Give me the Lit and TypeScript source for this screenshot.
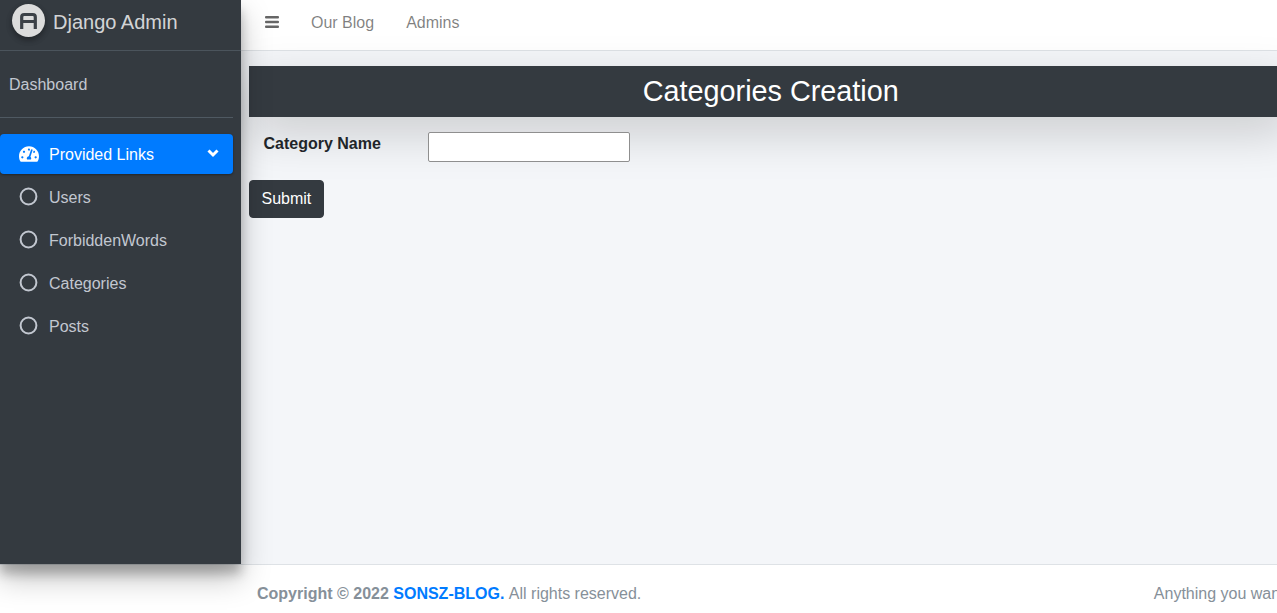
import { LitElement, html, css, svg } from "lit";
import { customElement } from "lit/decorators.js";

const gauge = svg`<path d="M288 32C128.94 32 0 160.94 0 320c0 52.8 14.25 102.26 39.06 144.8 5.61 9.62 16.3 15.2 27.44 15.2h443c11.14 0 21.83-5.58 27.44-15.2C561.75 422.26 576 372.8 576 320c0-159.06-128.94-288-288-288zm0 64c14.71 0 26.58 10.13 30.32 23.65-1.11 2.26-2.64 4.23-3.45 6.67l-9.22 27.67c-5.13 3.49-10.97 6.01-17.64 6.01-17.67 0-32-14.33-32-32S270.33 96 288 96zM96 384c-17.67 0-32-14.33-32-32s14.33-32 32-32 32 14.33 32 32-14.33 32-32 32zm48-160c-17.67 0-32-14.33-32-32s14.33-32 32-32 32 14.33 32 32-14.33 32-32 32zm246.77-72.41l-61.33 184C343.13 347.33 352 364.54 352 384c0 11.72-3.38 22.55-8.88 32H232.88c-5.5-9.45-8.88-20.28-8.88-32 0-33.94 26.5-61.43 59.9-63.59l61.34-184.01c4.17-12.56 17.73-19.45 30.36-15.17 12.57 4.19 19.35 17.79 15.17 30.36zm14.66 57.2l15.52-46.55c3.47-1.29 7.13-2.23 11.05-2.23 17.67 0 32 14.33 32 32s-14.33 32-32 32c-11.38-.01-20.89-6.28-26.57-15.22zM480 384c-17.67 0-32-14.33-32-32s14.33-32 32-32 32 14.33 32 32-14.33 32-32 32z"/>`;

@customElement("app-root")
export class AppRoot extends LitElement {
  static styles = css`
    :host {
      display: grid;
      grid-template-columns: 241px minmax(0, 1fr);
      grid-template-rows: 564px 1fr;
      width: 1277px;
      height: 613px;
      overflow: hidden;
      font-family: "Liberation Sans", Arial, sans-serif;
      font-size: 16px;
      line-height: 24px;
      color: #212529;
      background: #f4f6f9;
    }
    * { box-sizing: border-box; }
    .sidebar {
      background: #343a40;
      color: #c2c7d0;
      position: relative;
      z-index: 3;
      box-shadow: 0 14px 28px rgba(0,0,0,.25), 0 10px 10px rgba(0,0,0,.22);
    }
    .brand {
      height: 51px;
      display: flex;
      align-items: flex-start;
      gap: 8px;
      padding: 4px 0 0 12px;
      border-bottom: 1px solid #4b545c;
      font-size: 20px;
      line-height: 36px;
      color: rgba(255,255,255,.8);
    }
    .logo {
      width: 33px;
      height: 33px;
      border-radius: 50%;
      background: #dcdcdc;
      box-shadow: 0 3px 6px rgba(0,0,0,.16), 0 3px 6px rgba(0,0,0,.23);
      display: block;
      flex: none;
    }
    .panel {
      margin-right: 8px;
      height: 67px;
      padding: 22px 0 0 9px;
      border-bottom: 1px solid #4f5962;
    }
    .nav { list-style: none; margin: 16px 8px 0 0; padding: 0; }
    .nav li {
      height: 40px;
      margin-bottom: 3px;
      display: flex;
      align-items: center;
      padding: 2px 14px 0 19px;
      border-radius: 4px;
      color: #c2c7d0;
    }
    .nav li.active {
      background: #007bff;
      color: #fff;
      box-shadow: 0 1px 3px rgba(0,0,0,.12), 0 1px 2px rgba(0,0,0,.24);
    }
    .label { margin-left: 10px; }
    .gauge { width: 20px; height: 18px; flex: none; fill: currentColor; margin-top: -2px; }
    .circle { width: 19px; height: 19px; flex: none; fill: none; stroke: currentColor; stroke-width: 2; margin-top: -3px; margin-right: 1px; }
    .chev { width: 12px; height: 12px; margin-left: auto; margin-top: -4px; fill: none; stroke: #fff; stroke-width: 3; flex: none; }
    .main { min-width: 0; overflow: hidden; position: relative; z-index: 1; }
    .navbar {
      height: 51px;
      background: #fff;
      border-bottom: 1px solid #dee2e6;
      display: flex;
      align-items: center;
      padding: 0 0 4px 24px;
      color: rgba(0,0,0,.5);
    }
    .burger { width: 14px; height: 16px; fill: rgba(0,0,0,.6); margin: -2px 32px 0 0; flex: none; }
    .navbar a { margin-right: 32px; }
    .content { padding: 15px 0 0 7.5px; }
    .title {
      margin: 0 -16px 0 0;
      height: 51px;
      background: #343a40;
      color: #fff;
      font-size: 28.8px;
      font-weight: 400;
      line-height: 50px;
      text-align: center;
      box-shadow: 0 16px 48px rgba(0,0,0,.175);
    }
    .row {
      display: flex;
      align-items: flex-start;
      padding: 15px 0 0 15px;
    }
    .row label { font-weight: 700; width: 164.5px; flex: none; }
    .row input {
      width: 202px;
      height: 30px;
      background: #fff;
      border: 1px solid #8f8f8f;
      border-radius: 2px;
      padding: 1px 2px;
      display: block;
    }
    .submit {
      display: block;
      margin-top: 18px;
      height: 38px;
      padding: 6px 12px;
      background: #343a40;
      color: #fff;
      border: 1px solid #343a40;
      border-radius: 4px;
      font: inherit;
    }
    .footer {
      grid-column: 1 / -1;
      background: #fff;
      border-top: 1px solid #dee2e6;
      color: #869099;
      padding: 17px 0 0 257px;
      display: flex;
      white-space: nowrap;
      position: relative;
      z-index: 2;
    }
    .footer a { color: #007bff; }
    .right { margin-left: 512.5px; }
  `;

  render() {
    return html`
      <aside class="sidebar">
        <div class="brand">
          <svg class="logo" viewBox="0 0 33 33">
            <path d="M9.7 25V13a2.5 2.5 0 0 1 2.5-2.5h8.6a2.5 2.5 0 0 1 2.5 2.5V25M9.7 17.5h13.6" fill="none" stroke="#3c4147" stroke-width="3.2"/>
          </svg>
          <span>Django Admin</span>
        </div>
        <div class="panel">Dashboard</div>
        <ul class="nav">
          <li class="active">
            <svg class="gauge" viewBox="0 0 576 512">${gauge}</svg>
            <span class="label">Provided Links</span>
            <svg class="chev" viewBox="0 0 12 12"><path d="M1.5 3.5 6 8l4.5-4.5"/></svg>
          </li>
          ${["Users", "ForbiddenWords", "Categories", "Posts"].map(
            (t) => html`<li>
              <svg class="circle" viewBox="0 0 19 19"><circle cx="9.5" cy="9.5" r="7.9"/></svg>
              <span class="label">${t}</span>
            </li>`
          )}
        </ul>
      </aside>
      <div class="main">
        <nav class="navbar">
          <svg class="burger" viewBox="0 0 14 16"><rect y="2" width="14" height="2.4" rx="1"/><rect y="6.8" width="14" height="2.4" rx="1"/><rect y="11.6" width="14" height="2.4" rx="1"/></svg>
          <a>Our Blog</a>
          <a>Admins</a>
        </nav>
        <section class="content">
          <h1 class="title">Categories Creation</h1>
          <form>
            <div class="row">
              <label>Category Name</label>
              <input type="text" />
            </div>
            <button class="submit" type="button">Submit</button>
          </form>
        </section>
      </div>
      <footer class="footer">
        <span><b>Copyright © 2022 <a>SONSZ-BLOG.</a></b></span>
        <span class="rights">&nbsp;All rights reserved.</span>
        <span class="right">Anything you want</span>
      </footer>
    `;
  }
}
